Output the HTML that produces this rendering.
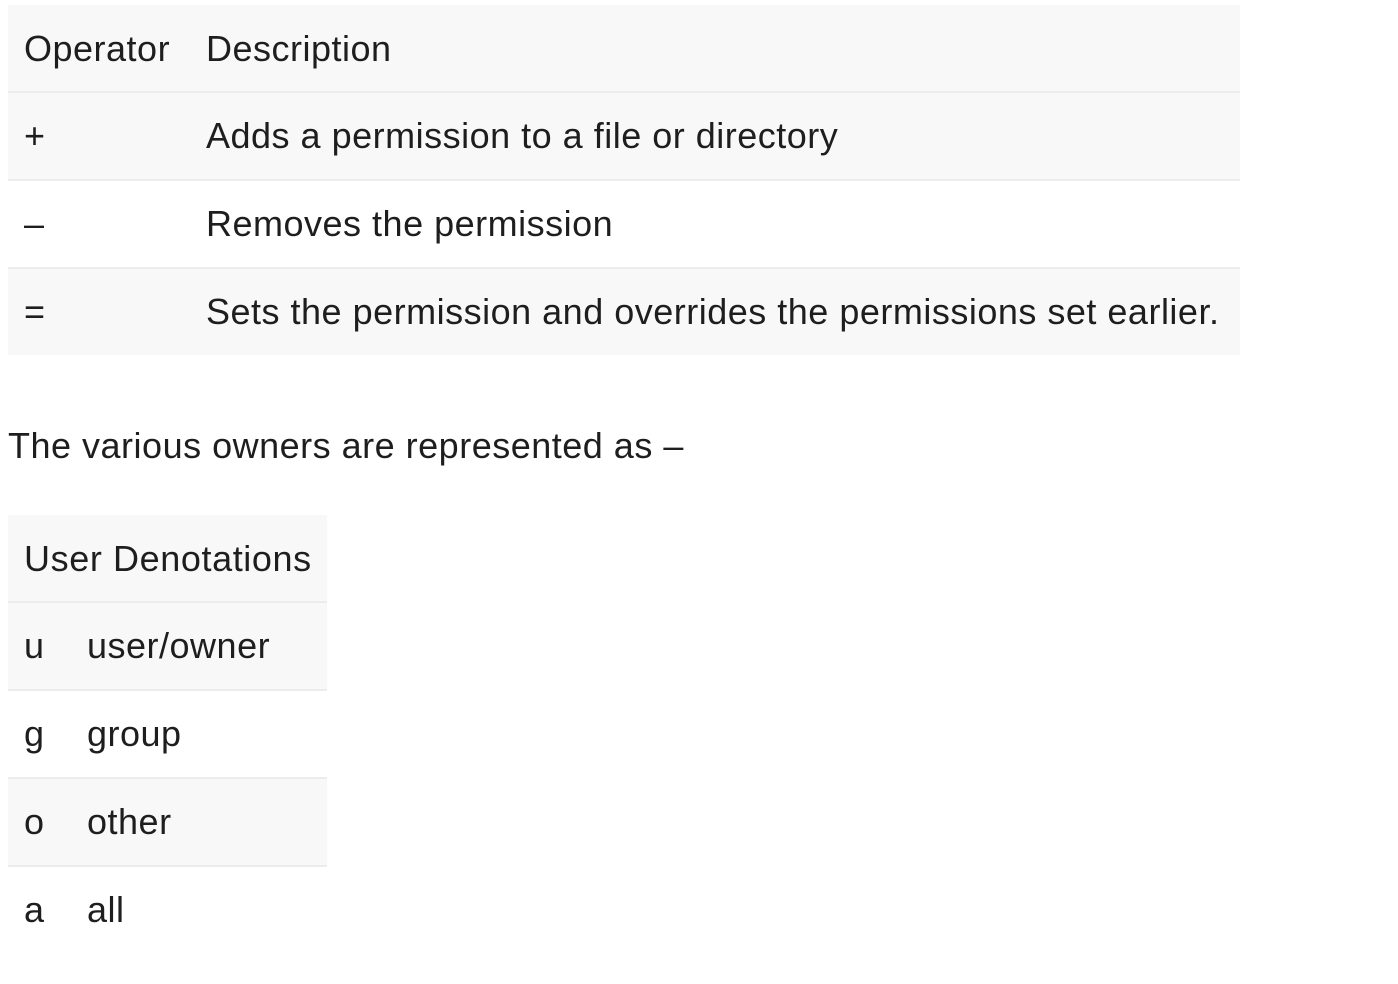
<!DOCTYPE html>
<html><head><meta charset="utf-8"><style>
html,body{margin:0;padding:0;background:#fff;width:1398px;height:984px;overflow:hidden}
body{font-family:"Liberation Sans",sans-serif;color:#1e1e1e;font-size:36px;position:relative}
.r{position:absolute;left:8px;box-sizing:border-box;border-bottom:2px solid #ececec}
.g{background:#f8f8f8}
.t{position:absolute;white-space:nowrap;line-height:40px;letter-spacing:0.5px}
</style></head><body>
<div class="r g" style="top:5px;width:1232px;height:88px"></div>
<div class="r g" style="top:93px;width:1232px;height:88px"></div>
<div class="r" style="top:181px;width:1232px;height:88px"></div>
<div class="r g" style="top:269px;width:1232px;height:86px;border-bottom:none"></div>
<div class="t" style="left:24px;top:29px">Operator</div>
<div class="t" style="left:206px;top:29px">Description</div>
<div class="t" style="left:24px;top:116px">+</div>
<div class="t" style="left:206px;top:116px">Adds a permission to a file or directory</div>
<div class="t" style="left:24px;top:204px">–</div>
<div class="t" style="left:206px;top:204px">Removes the permission</div>
<div class="t" style="left:24px;top:292px">=</div>
<div class="t" style="left:206px;top:292px">Sets the permission and overrides the permissions set earlier.</div>
<div class="t" style="left:8px;top:426px">The various owners are represented as –</div>
<div class="r g" style="top:515px;width:319px;height:88px"></div>
<div class="r g" style="top:603px;width:319px;height:88px"></div>
<div class="r" style="top:691px;width:319px;height:88px"></div>
<div class="r g" style="top:779px;width:319px;height:88px"></div>
<div class="r" style="top:867px;width:319px;height:88px;border-bottom:none"></div>
<div class="t" style="left:24px;top:539px;letter-spacing:0.6px">User Denotations</div>
<div class="t" style="left:24px;top:626px">u</div><div class="t" style="left:87px;top:626px">user/owner</div>
<div class="t" style="left:24px;top:714px">g</div><div class="t" style="left:87px;top:714px">group</div>
<div class="t" style="left:24px;top:802px">o</div><div class="t" style="left:87px;top:802px">other</div>
<div class="t" style="left:24px;top:890px">a</div><div class="t" style="left:87px;top:890px">all</div>
</body></html>
